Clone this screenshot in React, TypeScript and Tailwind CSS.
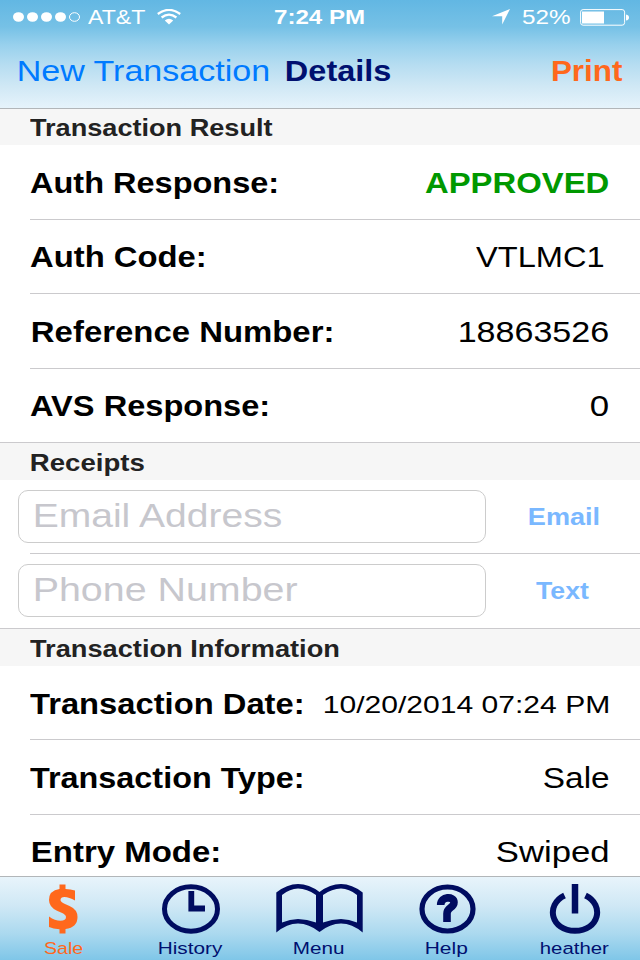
import { useLayoutEffect, useRef, useState } from "react";
import type { ReactNode } from "react";

// Single line of extended-width lettering whose visible ink spans exactly `w` pixels.
function Wide({ children, w, className = "" }: { children: string; w: number; className?: string }) {
  const ref = useRef<HTMLSpanElement>(null);
  const [transform, setTransform] = useState("none");
  useLayoutEffect(() => {
    const el = ref.current;
    const ctx = document.createElement("canvas").getContext("2d");
    if (!el || !ctx) return;
    const cs = getComputedStyle(el);
    ctx.font = `${cs.fontWeight} ${cs.fontSize} ${cs.fontFamily}`;
    const m = ctx.measureText(children);
    const s = w / (m.actualBoundingBoxLeft + m.actualBoundingBoxRight);
    setTransform(`translateX(${m.actualBoundingBoxLeft * s}px) scaleX(${s})`);
  }, [children, w]);
  return (
    <span className={`block shrink-0 whitespace-nowrap leading-none ${className}`} style={{ width: w }}>
      <span ref={ref} className="inline-block origin-left align-top leading-none" style={{ transform }}>
        {children}
      </span>
    </span>
  );
}

function SectionHeader({ title, w, className }: { title: string; w: number; className: string }) {
  return (
    <div className={`flex shrink-0 items-center bg-[#f6f6f6] text-[23.7px] font-bold text-[#222] ${className}`}>
      <Wide w={w}>{title}</Wide>
    </div>
  );
}

function Row({ className, line = "ml-[30px]", children }: { className: string; line?: string; children: ReactNode }) {
  return (
    <div className={`flex shrink-0 flex-col ${className}`}>
      <div className="flex flex-1 items-center justify-between pl-[30px] pr-[32px] pt-[2px] text-[28.7px]">{children}</div>
      <div className={`h-px shrink-0 bg-[#cbcacd] ${line}`} />
    </div>
  );
}

function Field({ label, w, className = "" }: { label: string; w: number; className?: string }) {
  return (
    <div className={`flex h-[53px] w-[468px] items-center rounded-[10px] border border-[#cccccc] pl-[15.5px] text-[33.8px] text-[#c7c7cd] ${className}`}>
      <Wide w={w}>{label}</Wide>
    </div>
  );
}

function Tab({ label, w, className, children }: { label: string; w: number; className: string; children: ReactNode }) {
  return (
    <div className={`flex w-[128px] flex-col items-center ${className}`}>
      <div className="flex h-[64px] w-full items-start justify-center pt-[7px]">{children}</div>
      <Wide w={w} className="text-[16.9px]">{label}</Wide>
    </div>
  );
}

export default function App() {
  return (
    <div className="flex h-[960px] w-[640px] flex-col overflow-hidden bg-white font-['Liberation_Sans',Arial,sans-serif] text-black">
      <header className="flex h-[109px] shrink-0 flex-col border-b border-[#b2b6b9] bg-[linear-gradient(180deg,#62b7e3_0%,#76c1e6_25%,#99d1ed_42%,#b6ddf1_60%,#d0e8f5_80%,#e6f3fb_100%)]">
        <div className="flex h-[34px] items-center pl-[13px] text-[20.3px] text-white">
          <svg width="68" height="12" viewBox="0 0 68 12" fill="white">
            <ellipse cx="5.5" cy="6" rx="5.5" ry="4.8" />
            <ellipse cx="19.5" cy="6" rx="5.5" ry="4.8" />
            <ellipse cx="33.5" cy="6" rx="5.5" ry="4.8" />
            <ellipse cx="47.5" cy="6" rx="5.5" ry="4.8" />
            <ellipse cx="61.5" cy="6" rx="5" ry="4.3" fill="none" stroke="white" />
          </svg>
          <Wide w={57} className="ml-[7px] pt-px">AT&T</Wide>
          <svg className="ml-[12px]" width="24" height="16" viewBox="0 0 24 16" fill="none" stroke="white" strokeWidth="2.3">
            <path d="M0.8 5 Q12 -3.2 23.2 5" />
            <path d="M4.6 8.5 Q12 2.8 19.4 8.5" />
            <path d="M7.8 11.5 Q12 8.2 16.2 11.5 L12 15.5Z" fill="white" stroke="none" />
          </svg>
          <Wide w={90} className="ml-[93px] pt-px font-bold">7:24 PM</Wide>
          <svg className="ml-[128px]" width="18" height="16" viewBox="0 0 18 16" fill="white">
            <path d="M18 0 L10.2 15.5 V7.2 H0Z" />
          </svg>
          <Wide w={48.5} className="ml-[12px] pt-px">52%</Wide>
          <svg className="ml-[9.5px]" width="50" height="17" viewBox="0 0 50 17">
            <rect x="0.6" y="0.6" width="44" height="15.6" rx="2.5" fill="none" stroke="white" strokeWidth="1" />
            <rect x="2" y="2.5" width="22" height="12" fill="white" />
            <path d="M46 5.5 Q49 6 49 8.5 Q49 11 46 11.5Z" fill="white" />
          </svg>
        </div>
        <div className="flex h-[74px] items-center pl-[18.8px] pt-px text-[28.7px]">
          <Wide w={250.6} className="text-[#007aff]">New Transaction</Wide>
          <Wide w={104.3} className="ml-[17.1px] font-bold text-[#001070]">Details</Wide>
          <Wide w={71} className="ml-[161px] font-bold text-[#ff681c]">Print</Wide>
        </div>
      </header>

      <main className="flex h-[767px] shrink-0 flex-col overflow-hidden">
        <SectionHeader title="Transaction Result" w={242.7} className="h-[36px] pl-[30px] pt-[3px]" />
        <Row className="h-[75px]">
          <Wide w={246.3} className="font-bold">Auth Response:</Wide>
          <Wide w={183.5} className="font-bold text-[#009800]">APPROVED</Wide>
        </Row>
        <Row className="h-[74px]">
          <Wide w={173.8} className="font-bold">Auth Code:</Wide>
          <Wide w={127.5} className="mr-[4.5px]">VTLMC1</Wide>
        </Row>
        <Row className="h-[75px]">
          <Wide w={299.5} className="ml-[1.7px] font-bold">Reference Number:</Wide>
          <Wide w={148}>18863526</Wide>
        </Row>
        <Row className="h-[74px]" line="ml-0">
          <Wide w={237.3} className="font-bold">AVS Response:</Wide>
          <Wide w={17}>0</Wide>
        </Row>

        <SectionHeader title="Receipts" w={113.7} className="h-[37px] pl-[31px] pt-[4px]" />
        <div className="flex h-[73px] shrink-0 items-center pl-[18px] text-[23.7px] font-bold text-[#7ab8ff]">
          <Field label="Email Address" w={248.3} className="pb-px font-normal" />
          <Wide w={69.3} className="ml-[43.3px] pt-[2px]">Email</Wide>
        </div>
        <div className="ml-[30px] h-px shrink-0 bg-[#cbcacd]" />
        <div className="flex h-[74px] shrink-0 items-center pb-[2px] pl-[18px] text-[23.7px] font-bold text-[#7ab8ff]">
          <Field label="Phone Number" w={262.3} className="font-normal" />
          <Wide w={53} className="ml-[50.3px] pt-[3px]">Text</Wide>
        </div>
        <div className="h-px shrink-0 bg-[#cbcacd]" />

        <SectionHeader title="Transaction Information" w={308.2} className="h-[37px] pl-[30px] pt-[4px]" />
        <Row className="h-[74px]">
          <Wide w={271.7} className="pt-px font-bold">Transaction Date:</Wide>
          <Wide w={284.5} className="pt-[3px] text-[24.5px]">10/20/2014 07:24 PM</Wide>
        </Row>
        <Row className="h-[75px]">
          <Wide w={271.7} className="font-bold">Transaction Type:</Wide>
          <Wide w={64.5}>Sale</Wide>
        </Row>
        <Row className="h-[74px]">
          <Wide w={186.3} className="ml-[1.7px] font-bold">Entry Mode:</Wide>
          <Wide w={111.5}>Swiped</Wide>
        </Row>
      </main>

      <nav className="flex h-[84px] shrink-0 border-t border-[#b2b6b9] bg-[linear-gradient(180deg,#e8f4fb_0%,#cfe8f5_35%,#abd9ef_68%,#7fc6e8_100%)] text-[#001070]">
        <Tab label="Sale" w={38.8} className="-ml-px text-[#ff681c]">
          <svg width="30" height="50" viewBox="0 0 30 50" fill="#ff681c">
            <path d="M11.5 0.5H17.5V5Q22.5 5 27 6.5V16.5Q21 13 16.5 13Q12.5 13 12.5 16Q12.5 18 17 20L21.5 22Q29.5 25.5 29.5 33Q29.5 43.5 17.5 45V49.5H11.5V45.3Q5 45 1 43V32.5Q7 36.8 12.5 36.8Q18 36.8 18 33Q18 30.5 13 28.5L9 26.7Q1 23 1 16Q1 6.5 11.5 5Z" />
          </svg>
        </Tab>
        <Tab label="History" w={64} className="">
          <svg width="60" height="50" viewBox="0 0 60 50" fill="none" stroke="#000c60">
            <ellipse cx="30" cy="25" rx="26.5" ry="22.2" strokeWidth="5" />
            <path d="M30.3 7V24.5H44" strokeWidth="5.8" />
          </svg>
        </Tab>
        <Tab label="Menu" w={50} className="">
          <svg width="90" height="50" viewBox="-1 0 90 50" fill="#000c60" fillRule="evenodd">
            <path d="M1.3 8.5Q12 0 23 0Q34 0 44.5 8Q55 0 66 0Q77 0 87.7 8.5V48.5Q77 39.5 66 39.5Q55 39.5 44.5 48Q34 39.5 23 39.5Q12 39.5 1.3 48.5ZM7 11V38.5Q15 35 23 35Q32 35 41 38.5V11Q32 4.5 23 4.5Q15 4.5 7 11ZM48 11V38.5Q57 35 66 35Q74 35 82 38.5V11Q74 4.5 66 4.5Q57 4.5 48 11Z" />
          </svg>
        </Tab>
        <Tab label="Help" w={41.3} className="">
          <svg width="58" height="50" viewBox="-1.5 0 58 50" fill="none" stroke="#000c60">
            <ellipse cx="28" cy="25" rx="25.5" ry="22" strokeWidth="5.2" />
            <path d="M21.2 21C21.2 12 34.5 12 34.5 18.2C34.5 24 27.5 23 27.5 29.5V38" strokeWidth="7.6" />
          </svg>
        </Tab>
        <Tab label="heather" w={68.3} className="">
          <svg width="52" height="50" viewBox="0 0 52 50" fill="none" stroke="#000c60">
            <path d="M15.5 11.5C-4 21 2 46.8 26 46.8C50 46.8 56 21 36.5 11.5" strokeWidth="6" />
            <path d="M26 0V29.5" strokeWidth="6.5" />
          </svg>
        </Tab>
      </nav>
    </div>
  );
}
